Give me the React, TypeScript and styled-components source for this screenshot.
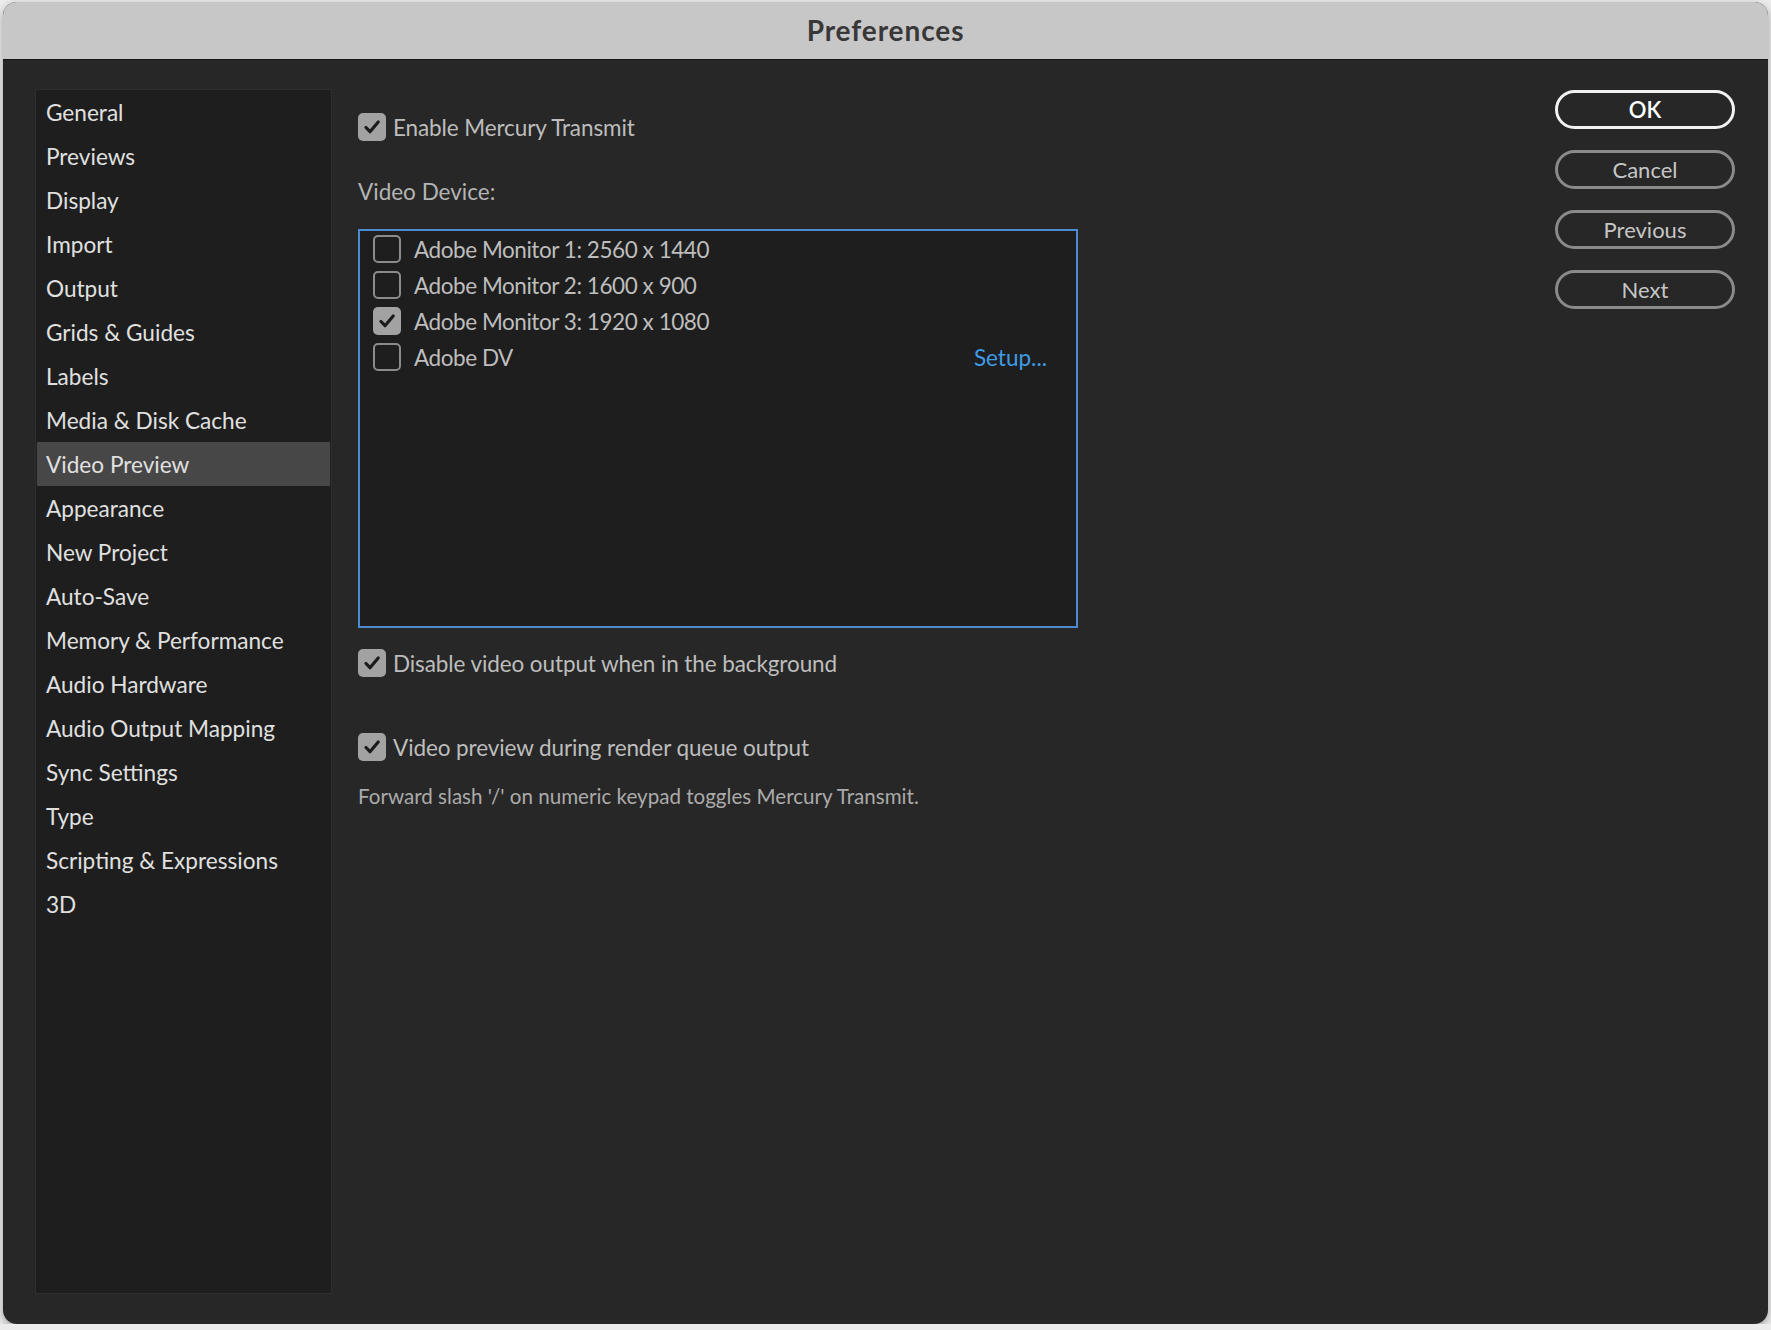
import styled, { createGlobalStyle } from 'styled-components';

const sections = [
  'General',
  'Previews',
  'Display',
  'Import',
  'Output',
  'Grids & Guides',
  'Labels',
  'Media & Disk Cache',
  'Video Preview',
  'Appearance',
  'New Project',
  'Auto-Save',
  'Memory & Performance',
  'Audio Hardware',
  'Audio Output Mapping',
  'Sync Settings',
  'Type',
  'Scripting & Expressions',
  '3D',
];

const devices = [
  { name: 'Adobe Monitor 1: 2560 x 1440', checked: false },
  { name: 'Adobe Monitor 2: 1600 x 900', checked: false },
  { name: 'Adobe Monitor 3: 1920 x 1080', checked: true },
  { name: 'Adobe DV', checked: false, setup: true },
];

const CheckMark = () => (
  <svg width="20" height="20" viewBox="0 0 20 20">
    <path d="M4 10.5l4 4.2L16.2 5" fill="none" stroke="#1c1c1c" strokeWidth="3.2" strokeLinecap="round" strokeLinejoin="round" />
  </svg>
);

const Check = ({ checked }: { checked: boolean }) => (
  <CheckBox $checked={checked}>{checked && <CheckMark />}</CheckBox>
);

const App = () => {
  return (
    <>
      <GlobalStyle />
      <Window>
        <TitleBar>Preferences</TitleBar>
        <Body>
          <Sidebar>
            {sections.map((s) => (
              <SidebarItem key={s} $active={s === 'Video Preview'}>
                {s}
              </SidebarItem>
            ))}
          </Sidebar>

          <Main>
            <OptionRow>
              <Check checked />
              <OptionLabel>Enable Mercury Transmit</OptionLabel>
            </OptionRow>

            <SectionLabel>Video Device:</SectionLabel>

            <DeviceList>
              {devices.map((d) => (
                <DeviceRow key={d.name}>
                  <Check checked={d.checked} />
                  <DeviceName>{d.name}</DeviceName>
                  {d.setup && <SetupLink>Setup...</SetupLink>}
                </DeviceRow>
              ))}
            </DeviceList>

            <OptionRow $top={21}>
              <Check checked />
              <OptionLabel>Disable video output when in the background</OptionLabel>
            </OptionRow>

            <OptionRow $top={56}>
              <Check checked />
              <OptionLabel>Video preview during render queue output</OptionLabel>
            </OptionRow>

            <Hint>Forward slash '/' on numeric keypad toggles Mercury Transmit.</Hint>
          </Main>

          <ButtonColumn>
            <DialogButton $primary>OK</DialogButton>
            <DialogButton>Cancel</DialogButton>
            <DialogButton>Previous</DialogButton>
            <DialogButton>Next</DialogButton>
          </ButtonColumn>
        </Body>
      </Window>
    </>
  );
};

export default App;

const GlobalStyle = createGlobalStyle`
  html, body {
    margin: 0;
    padding: 0;
    background: #ececec;
    font-family: Lato, "Noto Sans", "Liberation Sans", sans-serif;
  }
  * {
    box-sizing: border-box;
  }
`;

const Window = styled.div`
  width: 1765px;
  height: 1322px;
  margin: 2px 0 0 3px;
  border-radius: 14px;
  overflow: hidden;
  background: #272727;
  display: flex;
  flex-direction: column;
  box-shadow: 0 3px 8px rgba(0, 0, 0, 0.35);
`;

const TitleBar = styled.div`
  height: 58px;
  flex-shrink: 0;
  background: #c8c7c8;
  border-bottom: 1px solid #141414;
  display: flex;
  align-items: center;
  justify-content: center;
  font-size: 28px;
  font-weight: 700;
  letter-spacing: 0.9px;
  color: #383838;
  padding-bottom: 2px;
`;

const Body = styled.div`
  flex: 1;
  display: flex;
  gap: 26px;
  padding: 29px 32px 30px 32px;
`;

const Sidebar = styled.div`
  width: 297px;
  flex-shrink: 0;
  background: #1e1e1e;
  border: 1px solid #2f2f2f;
  display: flex;
  flex-direction: column;
`;

const SidebarItem = styled.div<{ $active?: boolean }>`
  height: 44px;
  margin: 0 1px;
  padding-left: 9px;
  display: flex;
  align-items: center;
  font-size: 22.6px;
  color: #e0e0e0;
  background: ${(p) => (p.$active ? '#474747' : 'transparent')};
`;

const Main = styled.div`
  flex: 1;
  display: flex;
  flex-direction: column;
  align-items: flex-start;
  padding-top: 24px;
`;

const OptionRow = styled.div<{ $top?: number }>`
  display: flex;
  align-items: center;
  gap: 7px;
  height: 28px;
  margin-top: ${(p) => p.$top ?? 0}px;
`;

const CheckBox = styled.span<{ $checked: boolean }>`
  width: 28px;
  height: 28px;
  flex-shrink: 0;
  border-radius: 5px;
  display: flex;
  align-items: center;
  justify-content: center;
  background: ${(p) => (p.$checked ? '#a2a2a2' : 'transparent')};
  border: ${(p) => (p.$checked ? 'none' : '2.5px solid #8b8b8b')};
`;

const OptionLabel = styled.span`
  font-size: 22.5px;
  letter-spacing: -0.1px;
  color: #bdbdbd;
`;

const SectionLabel = styled.div`
  margin-top: 37px;
  font-size: 22.5px;
  line-height: 28px;
  color: #b4b4b4;
`;

const DeviceList = styled.div`
  margin-top: 23px;
  width: 720px;
  height: 399px;
  background: #1e1e1e;
  border: 2px solid #4a8bd2;
  padding: 0 29px 0 13px;
  display: flex;
  flex-direction: column;
`;

const DeviceRow = styled.div`
  height: 36px;
  display: flex;
  align-items: center;
  gap: 13px;
`;

const DeviceName = styled.span`
  flex: 1;
  font-size: 22.5px;
  letter-spacing: -0.45px;
  color: #bdbdbd;
`;

const SetupLink = styled.span`
  font-size: 22.5px;
  color: #3e9be6;
  cursor: pointer;
`;

const Hint = styled.div`
  margin-top: 23px;
  font-size: 20.6px;
  line-height: 24px;
  color: #ababab;
`;

const ButtonColumn = styled.div`
  width: 180px;
  flex-shrink: 0;
  display: flex;
  flex-direction: column;
  gap: 21px;
  padding-top: 1px;
  margin-right: 1px;
`;

const DialogButton = styled.button<{ $primary?: boolean }>`
  height: 39px;
  border-radius: 20px;
  background: transparent;
  font-family: inherit;
  font-size: 22px;
  cursor: pointer;
  border: 3px solid ${(p) => (p.$primary ? '#f2f2f2' : '#8a8a8a')};
  color: ${(p) => (p.$primary ? '#ffffff' : '#c6c6c6')};
  font-weight: ${(p) => (p.$primary ? 600 : 400)};
  display: flex;
  align-items: center;
  justify-content: center;
  padding: 0 0 1px;
`;
